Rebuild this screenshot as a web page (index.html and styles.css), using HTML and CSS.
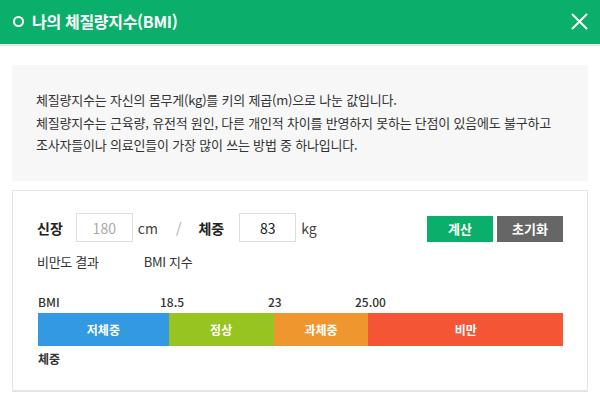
FILE: index.html
```html
<!DOCTYPE html>
<html lang="ko">
<head>
  <meta charset="UTF-8">
  <meta name="viewport" content="width=device-width, initial-scale=1.0">
  <title>나의 체질량지수(BMI)</title>
  <link rel="stylesheet" href="styles.css">
</head>
<body>
  <div class="popup">
    <div class="popup-head">
      <h1 class="popup-title"><span class="title-dot"></span>나의 체질량지수(BMI)</h1>
      <button class="close-btn" aria-label="닫기">
        <svg width="17" height="17" viewBox="0 0 17 17">
          <path d="M1 1 L16 16 M16 1 L1 16" stroke="#fff" stroke-width="2" fill="none"/>
        </svg>
      </button>
    </div>

    <div class="popup-body">
      <div class="info-box">
        <p>체질량지수는 자신의 몸무게(kg)를 키의 제곱(m)으로 나눈 값입니다.</p>
        <p>체질량지수는 근육량, 유전적 원인, 다른 개인적 차이를 반영하지 못하는 단점이 있음에도 불구하고</p>
        <p>조사자들이나 의료인들이 가장 많이 쓰는 방법 중 하나입니다.</p>
      </div>

      <div class="calc-box">
        <div class="input-row">
          <label class="field-label">신장</label>
          <input class="field-input placeholder" type="text" placeholder="180">
          <span class="unit">cm</span>
          <span class="slash">/</span>
          <label class="field-label">체중</label>
          <input class="field-input" type="text" value="83">
          <span class="unit">kg</span>
          <div class="btns">
            <button class="btn btn-calc">계산</button>
            <button class="btn btn-reset">초기화</button>
          </div>
        </div>

        <div class="result-row">
          <span class="result-label">비만도 결과</span>
          <span class="result-label">BMI 지수</span>
        </div>

        <div class="scale">
          <div class="scale-nums">
            <span class="num num-bmi">BMI</span>
            <span class="num num-185">18.5</span>
            <span class="num num-23">23</span>
            <span class="num num-25">25.00</span>
          </div>
          <div class="scale-bar">
            <div class="seg seg-under">저체중</div>
            <div class="seg seg-normal">정상</div>
            <div class="seg seg-over">과체중</div>
            <div class="seg seg-obese">비만</div>
          </div>
          <div class="scale-foot">체중</div>
        </div>
      </div>
    </div>
  </div>
</body>
</html>
```

FILE: styles.css
```css
* {
  box-sizing: border-box;
}

body {
  margin: 0;
  background: #fff;
  font-family: "Noto Sans CJK KR", "Noto Sans", sans-serif;
  color: #333;
}

.popup-head {
  display: flex;
  align-items: center;
  justify-content: space-between;
  height: 46px;
  padding: 0 12px 2px 13px;
  background: #0aaf6b;
  border-bottom: 2px solid #e6e6e6;
}

.popup-title {
  display: flex;
  align-items: center;
  margin: 0;
  font-size: 16px;
  font-weight: bold;
  color: #fff;
  letter-spacing: -0.3px;
}

.title-dot {
  width: 11px;
  height: 11px;
  margin-right: 8px;
  border: 2.5px solid #fff;
  border-radius: 50%;
}

.close-btn {
  display: flex;
  padding: 0;
  border: 0;
  background: none;
}

.popup-body {
  padding: 19px 12px 0;
}

.info-box {
  height: 116px;
  padding: 24px 24px 0;
  background: #f7f7f7;
}

.info-box p {
  margin: 0;
  font-size: 13px;
  line-height: 22.5px;
  color: #333;
  letter-spacing: -0.2px;
}

.calc-box {
  margin-top: 9px;
  height: 202px;
  padding: 22px 24px 0 24px;
  border: 1px solid #e5e5e5;
  border-bottom-width: 2px;
}

.input-row {
  display: flex;
  align-items: center;
  height: 29px;
}

.field-label {
  font-size: 14px;
  font-weight: bold;
  color: #222;
  margin-right: 13px;
}

.field-label + .field-input {
  margin-left: 0;
}

.slash + .field-label {
  margin-right: 15px;
}

.field-input {
  width: 57px;
  height: 29px;
  border: 1px solid #dedede;
  padding: 0;
  text-align: center;
  font-family: inherit;
  font-size: 14px;
  color: #222;
  outline: none;
}

.field-input::placeholder {
  color: #aaa;
}

.unit {
  margin-left: 5px;
  font-size: 14px;
  color: #444;
}

.slash {
  margin: 0 17px 0 18px;
  font-size: 14px;
  color: #aaa;
}

.btns {
  display: flex;
  gap: 4px;
  margin-left: auto;
  padding-top: 2px;
}

.btn {
  width: 66px;
  height: 26px;
  border: 0;
  padding: 0;
  font-family: inherit;
  font-size: 13px;
  font-weight: bold;
  color: #fff;
}

.btn-calc {
  background: #0aaf6b;
}

.btn-reset {
  background: #666;
}

.result-row {
  display: flex;
  gap: 45px;
  margin-top: 10px;
}

.result-label {
  font-size: 13px;
  color: #333;
  letter-spacing: -0.3px;
}

.scale {
  margin-top: 20px;
}

.scale-nums {
  position: relative;
  height: 22px;
  font-size: 12px;
  font-weight: 500;
  color: #333;
}

.num {
  position: absolute;
  top: 2px;
}

.num-bmi { left: 1px; }
.num-185 { left: 123px; }
.num-23 { left: 231px; }
.num-25 { left: 318px; }

.scale-bar {
  display: flex;
  height: 33px;
  margin-left: 1px;
}

.seg {
  display: flex;
  align-items: center;
  justify-content: center;
  font-size: 12px;
  font-weight: bold;
  color: #fff;
}

.seg-under {
  width: 131px;
  background: #3399e2;
}

.seg-normal {
  width: 105px;
  background: #97c421;
}

.seg-over {
  width: 95px;
  background: #f0962e;
}

.seg-obese {
  width: 195px;
  background: #f35535;
}

.scale-foot {
  margin-top: 4px;
  margin-left: 1px;
  font-size: 12px;
  font-weight: bold;
  color: #333;
}
```
